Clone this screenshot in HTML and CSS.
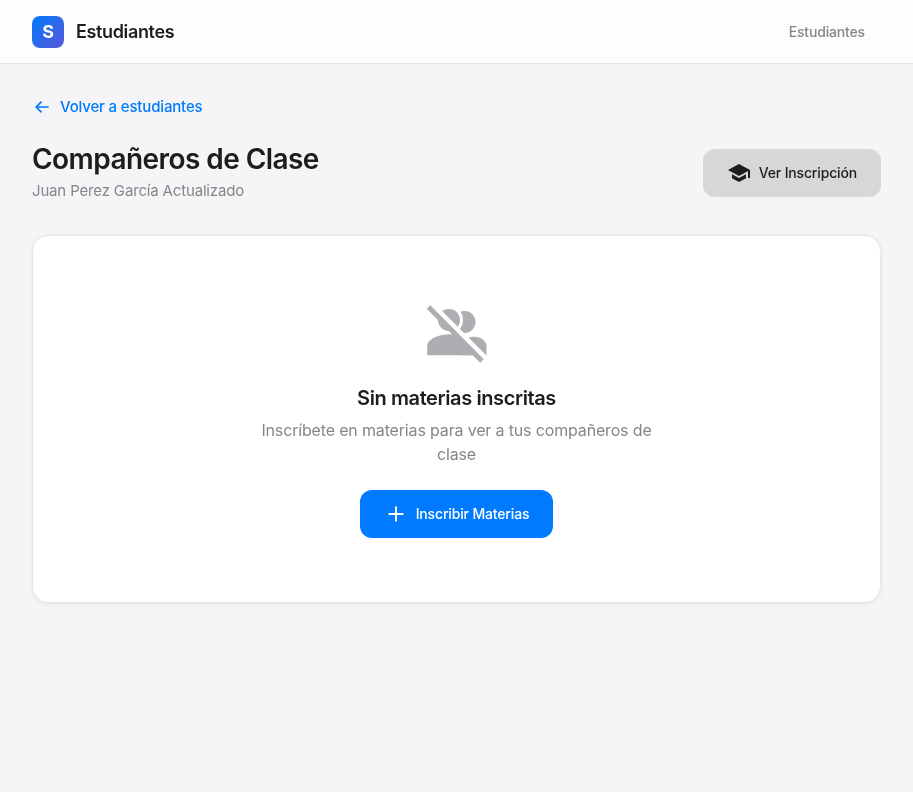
FILE: index.html
```html
<!DOCTYPE html>
<html lang="es">
<head>
    <meta charset="UTF-8">
    <meta name="viewport" content="width=device-width, initial-scale=1.0">
    <title>Compañeros de Clase</title>
    <link rel="stylesheet" href="styles.css">
</head>
<body>
    <header class="navbar">
        <div class="nav-brand">
            <div class="nav-logo">S</div>
            <span class="nav-title">Estudiantes</span>
        </div>
        <a class="nav-link" href="#">Estudiantes</a>
    </header>

    <main class="main">
        <a class="back-link" href="#">
            <svg class="back-icon" viewBox="0 0 24 24"><path d="M20 12H5M11.500 5.500 5 12l6.500 6.500"/></svg>
            Volver a estudiantes
        </a>

        <div class="page-header">
            <div>
                <h1 class="page-title">Compañeros de Clase</h1>
                <p class="page-subtitle">Juan Perez García Actualizado</p>
            </div>
            <a class="btn btn-secondary" href="#">
                <svg class="btn-icon" viewBox="0 0 24 24"><path d="M5 13.180v4L12 21l7-3.820v-4L12 17l-7-3.820zM12 3 1 9l11 6 9-4.910V17h2V9L12 3z"/></svg>
                Ver Inscripción
            </a>
        </div>

        <!-- Empty state -->
        <section class="card">
            <svg class="empty-icon" viewBox="0 0 64 64">
                <circle cx="39.500" cy="20" r="11"/>
                <circle class="head-gap" cx="24" cy="18" r="14"/>
                <circle cx="24" cy="18" r="11"/>
                <path d="M36 53.300V42c2-5 8-7.300 12.800-7.300 7.200 0 12.700 4.300 12.700 9.300v9.300H36z"/>
                <path class="head-gap" d="M30 32h10v6H30z"/>
                <path d="M2.200 53.300V44c0-7 11.800-11.700 23.300-11.700 4.500 0 8.500.7 11.500 1.700l13 19.300H2.200z"/>
                <path class="slash-gap" d="M6.500 2 63 58.500"/>
                <path class="slash" d="M3.500 5 57 59"/>
            </svg>
            <h2 class="empty-title">Sin materias inscritas</h2>
            <p class="empty-text">Inscríbete en materias para ver a tus compañeros de clase</p>
            <a class="btn btn-primary" href="#">
                <svg class="btn-icon plus-icon" viewBox="0 0 24 24"><path d="M12 4.500v15M4.500 12h15"/></svg>
                Inscribir Materias
            </a>
        </section>
    </main>
</body>
</html>
```

FILE: styles.css
```css
* {
    margin: 0;
    padding: 0;
    box-sizing: border-box;
}

body {
    font-family: Inter, "Liberation Sans", sans-serif;
    background-color: #f5f5f7;
    color: #1d1d1f;
    letter-spacing: -0.01em;
    min-height: 100vh;
}

a {
    text-decoration: none;
}

.navbar {
    height: 64px;
    background-color: rgba(255, 255, 255, 0.8);
    backdrop-filter: blur(20px);
    border-bottom: 1px solid #e5e5e7;
    display: flex;
    align-items: center;
    justify-content: space-between;
    padding: 0 32px;
}

.nav-brand {
    display: flex;
    align-items: center;
    gap: 12px;
}

.nav-logo {
    width: 32px;
    height: 32px;
    border-radius: 8px;
    background: linear-gradient(135deg, #007aff, #5856d6);
    color: white;
    font-size: 18px;
    font-weight: 700;
    display: flex;
    align-items: center;
    justify-content: center;
}

.nav-title {
    font-size: 18px;
    font-weight: 600;
    letter-spacing: -0.02em;
}

.nav-link {
    font-size: 14px;
    font-weight: 500;
    color: #86868b;
    padding: 8px 16px;
}

.main {
    padding: 32px;
    will-change: opacity;
}

.back-link {
    display: inline-flex;
    align-items: center;
    gap: 8px;
    color: #007aff;
    font-size: 15px;
    font-weight: 500;
    line-height: 1.5;
    margin-bottom: 24px;
}

.back-icon {
    width: 20px;
    height: 20px;
    fill: none;
    stroke: #007aff;
    stroke-width: 2;
}

.page-header {
    display: flex;
    align-items: center;
    justify-content: space-between;
    margin-bottom: 32px;
}

.page-title {
    font-size: 28px;
    font-weight: 600;
    line-height: 1.2;
    letter-spacing: -0.02em;
}

.page-subtitle {
    font-size: 15px;
    line-height: 1.5;
    color: #86868b;
    margin-top: 4px;
}

.btn {
    display: flex;
    align-items: center;
    gap: 8px;
    height: 48px;
    padding: 0 24px;
    border-radius: 12px;
    font-size: 14px;
    font-weight: 500;
}

.btn-secondary {
    background-color: #d7d7d9;
    color: #1d1d1f;
}

.btn-primary {
    background-color: #007aff;
    color: white;
}

.btn-icon {
    width: 24px;
    height: 24px;
    fill: currentColor;
}

.plus-icon {
    fill: none;
    stroke: white;
    stroke-width: 2;
}

.card {
    background-color: white;
    border: 1px solid #e5e5e7;
    border-radius: 16px;
    box-shadow: 0 1px 4px rgba(0, 0, 0, 0.08);
    padding: 66px 32px 64px;
    display: flex;
    flex-direction: column;
    align-items: center;
    text-align: center;
}

.empty-icon {
    width: 64px;
    height: 64px;
    fill: #aeaeb2;
    margin-bottom: 20px;
    overflow: visible;
}

.head-gap {
    fill: white;
}

.slash-gap {
    stroke: white;
    stroke-width: 5;
}

.slash {
    stroke: #aeaeb2;
    stroke-width: 5;
}

.empty-title {
    font-size: 20px;
    font-weight: 600;
    line-height: 1.2;
    letter-spacing: -0.02em;
}

.empty-text {
    font-size: 16px;
    line-height: 1.5;
    color: #86868b;
    max-width: 400px;
    margin-top: 8px;
    margin-bottom: 24px;
}
```
